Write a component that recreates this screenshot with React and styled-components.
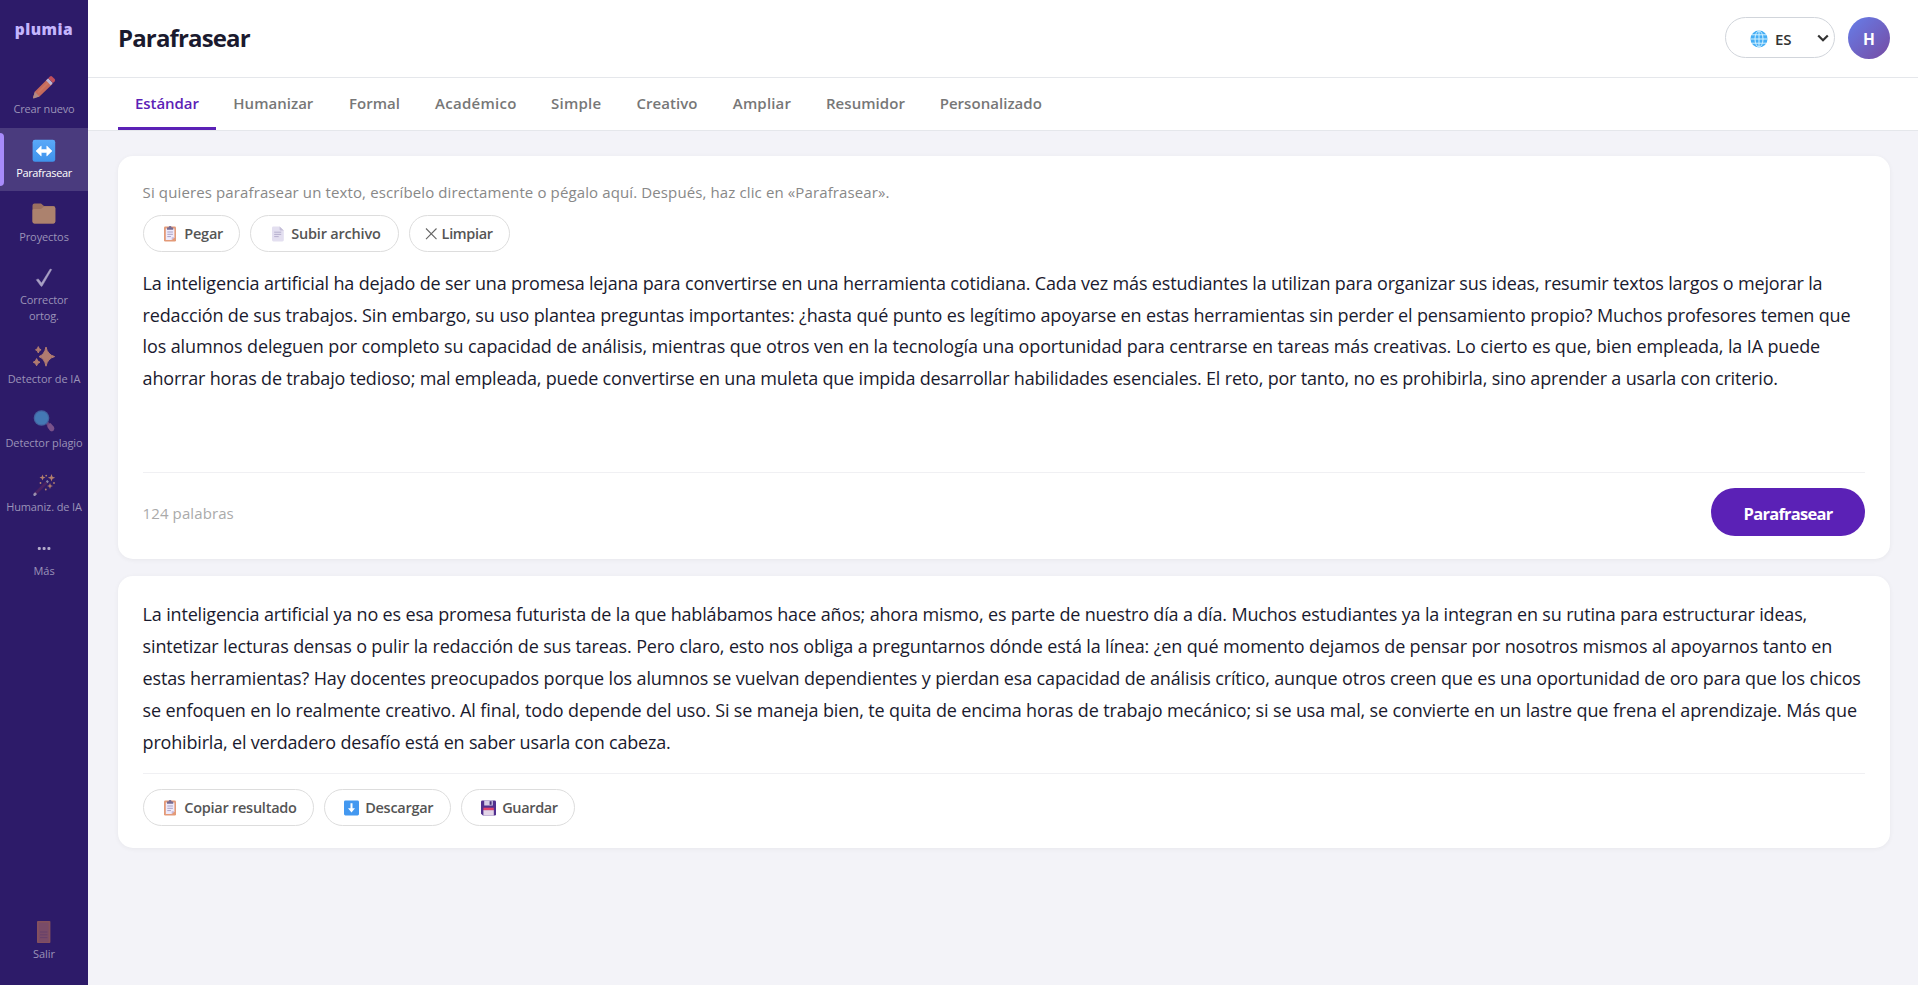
import React from 'react';
import styled, { createGlobalStyle } from 'styled-components';

const Global = createGlobalStyle`
  *, *::before, *::after { box-sizing: border-box; }
  body {
    margin: 0;
    background: #f3f3f8;
    font-family: "Open Sans", "Noto Sans", sans-serif;
    color: #1a1a2e;
  }
  button { font-family: inherit; cursor: pointer; }
`;

const Shell = styled.div`
  display: flex;
  height: 985px;
  overflow: hidden;
`;

const Sidebar = styled.aside`
  display: flex;
  flex-direction: column;
  flex: none;
  width: 88px;
  padding-bottom: 12.5px;
  background: #2d1b69;
`;

const Logo = styled.div`
  height: 64px;
  padding-top: 18px;
  text-align: center;
  font-size: 15.5px;
  font-weight: 800;
  line-height: 22px;
  letter-spacing: 0.5px;
  color: #c4b5fd;
`;

const NavItem = styled.a`
  position: relative;
  display: flex;
  flex-direction: column;
  align-items: center;
  flex: none;
  padding: 10px 0 11px;
  margin-top: ${(p) => (p.$last ? 'auto' : '0')};
  background: ${(p) => (p.$active ? 'rgba(255, 255, 255, 0.14)' : 'transparent')};
  color: ${(p) => (p.$active ? '#ffffff' : '#9b93b8')};

  &::before {
    content: '';
    display: ${(p) => (p.$active ? 'block' : 'none')};
    position: absolute;
    left: 0;
    top: 5px;
    bottom: 5px;
    width: 4px;
    border-radius: 0 4px 4px 0;
    background: #a78bfa;
  }
`;

const NavIcon = styled.span`
  display: flex;
  align-items: center;
  justify-content: center;
  height: 26px;
  margin-bottom: 1.2px;
`;

const NavLabel = styled.span`
  white-space: pre;
  text-align: center;
  font-size: 11px;
  line-height: 15.5px;
  letter-spacing: ${(p) => p.$track}px;
`;

const Main = styled.main`
  display: flex;
  flex-direction: column;
  flex: 1;
  min-width: 0;
`;

const Header = styled.header`
  display: flex;
  align-items: center;
  justify-content: space-between;
  height: 78px;
  padding: 0 28px 1px 30px;
  background: #ffffff;
  border-bottom: 1px solid #e5e7eb;
`;

const Title = styled.h1`
  margin: 0;
  font-size: 24px;
  font-weight: 700;
  line-height: 34px;
  letter-spacing: -0.85px;
`;

const HeaderTools = styled.div`
  display: flex;
  align-items: center;
  gap: 13px;
  height: 42px;
`;

const LanguageSelect = styled.button`
  display: flex;
  align-items: center;
  width: 110px;
  height: 41px;
  margin-bottom: 1px;
  padding: 0 5px 0 24px;
  border: 1px solid #d1d5db;
  border-radius: 21px;
  background: #ffffff;
  color: #333333;
  font-size: 15px;
  font-weight: 600;

  span { flex: 1; margin-left: 7px; padding-top: 2px; text-align: left; }
  svg:first-child { margin-top: 3px; }
`;

const Avatar = styled.div`
  width: 42px;
  height: 42px;
  border-radius: 50%;
  background: linear-gradient(135deg, #667eea, #764ba2);
  color: #ffffff;
  font-size: 15.5px;
  font-weight: 700;
  line-height: 44px;
  text-align: center;
`;

const Tabs = styled.nav`
  display: flex;
  height: 53px;
  flex: none;
  padding-left: 30px;
  background: #ffffff;
  border-bottom: 1px solid #e5e7eb;
`;

const Tab = styled.button`
  flex: none;
  width: ${(p) => p.$width}px;
  padding: 1px 0 0 17px;
  border: 0;
  border-bottom: 3px solid ${(p) => (p.$active ? '#5b21b6' : 'transparent')};
  background: none;
  color: ${(p) => (p.$active ? '#5b21b6' : '#777777')};
  font-size: 15px;
  font-weight: 600;
  letter-spacing: ${(p) => p.$track}px;
  text-align: left;
`;

const Content = styled.div`
  display: flex;
  flex-direction: column;
  gap: 17.3px;
  padding: 25px 28px 0 30px;
`;

const Card = styled.section`
  padding: 22.5px 25px 22.5px 24.6px;
  border-radius: 15px;
  background: #ffffff;
  box-shadow: 0 1px 5px rgba(0, 0, 0, 0.05);
`;

const Hint = styled.p`
  margin: 0 0 10px;
  font-size: 15px;
  line-height: 26.6px;
  letter-spacing: 0.12px;
  color: #888888;
`;

const ButtonRow = styled.div`
  display: flex;
  gap: 10px;
`;

const PillButton = styled.button`
  display: flex;
  align-items: center;
  width: ${(p) => p.$width}px;
  height: 36.7px;
  padding: 0 0 0 ${(p) => p.$inset ?? 17}px;
  border: 1px solid #dddddd;
  border-radius: 19px;
  background: #ffffff;
  color: #555555;
  font-size: 14.5px;
  font-weight: 600;
  white-space: nowrap;
  letter-spacing: ${(p) => p.$track}px;

  svg { flex: none; margin-top: 2px; margin-right: ${(p) => p.$gap ?? 3.6}px; }
  span { padding-top: 1px; }
`;

const TextBody = styled.div`
  height: ${(p) => p.$height}px;
  margin: ${(p) => p.$offset ?? 0}px 0 0;
  padding-top: 0.9px;
  font-size: 18px;
  line-height: 31.875px;
`;

const Line = styled.div`
  white-space: nowrap;
  letter-spacing: ${(p) => p.$track}px;
`;

const CardFooter = styled.div`
  display: flex;
  align-items: center;
  justify-content: space-between;
  margin-top: ${(p) => p.$offset ?? 0}px;
  padding-top: 15px;
  border-top: 1px solid #f0f0f3;
`;

const WordCount = styled.span`
  padding-top: 2px;
  font-size: 15px;
  letter-spacing: 0.1px;
  color: #aaaaaa;
`;

const PrimaryButton = styled.button`
  width: 154px;
  height: 48px;
  padding: 2px 0 0;
  border: 0;
  border-radius: 24px;
  background: #5b21b6;
  color: #ffffff;
  font-size: 16.5px;
  font-weight: 700;
  letter-spacing: -0.75px;
`;

const Pencil = () => (
  <svg width="24" height="24" viewBox="0 0 24 24">
    <path d="M3 16.5 15.5 4l5 5L7.5 21.5 1.5 23q-.6 0-.5-.7z" fill="#c46a5c" />
    <path d="M1 23.2 2.8 16.8 7.4 21.6 1.7 23.6z" fill="#b08a86" />
    <path d="m14 5.5 2.2-2.2 4.7 4.7-2.2 2.2z" fill="#b9b3d2" />
    <path d="m16.2 3.3 1.7-1.7q1.2-1 2.4.1l2.4 2.4q1 1.1 0 2.2L21 8z" fill="#bf4f5c" />
    <path d="m6 17.8 10-10" stroke="#cc7460" strokeWidth="2" />
  </svg>
);

const SwapArrows = () => (
  <svg width="24" height="24" viewBox="0 0 24 24">
    <defs>
      <linearGradient id="swapBlue" x1="0" y1="0" x2="0" y2="1">
        <stop offset="0" stopColor="#5aa9f8" />
        <stop offset="1" stopColor="#3f93ec" />
      </linearGradient>
    </defs>
    <rect x=".6" y=".8" width="22.600" height="22" rx="2.400" fill="url(#swapBlue)" />
    <path d="M4 12 9.200 7v3.600h5.600V7L20 12l-5.200 5v-3.600H9.200V17z" fill="#fff" stroke="#fff" strokeWidth=".6" strokeLinejoin="round" />
  </svg>
);

const Folder = () => (
  <svg width="24" height="24" viewBox="0 0 24 24">
    <path d="M.5 3.500q0-2 2-2H9L12 4h9.300q2 0 2 2v13.500q0 2-2 2H2.500q-2 0-2-2z" fill="#9b7060" />
    <path d="M.5 8.300Q.5 7 2 7h7l3-2.500h9.700q1.600 0 1.600 1.800v13.200q0 2-2 2H2.500q-2 0-2-2z" fill="#ac826e" />
  </svg>
);

const Check = () => (
  <svg width="24" height="24" viewBox="0 0 24 24">
    <path d="m4.300 13.800 2-.9 3.200 4.200L18.200 3l1.500.5L10 20.300H9z" fill="#a8a0c4" stroke="#a8a0c4" strokeWidth=".5" strokeLinejoin="round" />
  </svg>
);

const Sparkles = () => (
  <svg width="24" height="24" viewBox="0 0 24 24">
    <g fill="#b07b70" stroke="#b07b70" strokeWidth="1" strokeLinejoin="round">
      <path d="M14 2q1.600 7.800 8.600 9.600Q15.600 13.400 14 21.200q-1.600-7.800-7-9.600Q12.400 9.800 14 2z" />
      <path d="M6.300 1.600q.5 2.700 2.800 3.200-2.300.5-2.800 3.200-.5-2.700-2.800-3.200 2.300-.5 2.800-3.200z" />
      <path d="M4.600 13.600q.7 3 3.400 3.600-2.700.6-3.400 3.600-.7-3-3.400-3.600 2.700-.6 3.400-3.600z" />
    </g>
  </svg>
);

const Magnifier = () => (
  <svg width="24" height="24" viewBox="0 0 24 24">
    <path d="m13.500 14 2.200-1.500 6.300 5.700q1 2.500-.8 3.700-1.500 1-3.200-.2z" fill="#6b4480" />
    <path d="m16.500 15.500 2-1.500 3.500 4q1 2.300-.8 3.700-1.500 1-3.200-.2l-2.700-3.500z" fill="#79528a" />
    <circle cx="9.500" cy="9" r="7.800" fill="#44619f" />
    <circle cx="9.500" cy="9" r="6.600" fill="#4478b4" />
  </svg>
);

const Wand = () => (
  <svg width="24" height="24" viewBox="0 0 24 24">
    <path d="M2.500 21.500 14.500 9.500" stroke="#4a2263" strokeWidth="2.800" />
    <path d="m1.500 20.800 1.600-1.600 1.900 1.900-1.600 1.600q-1 .7-1.700 0t-.2-1.900z" fill="#9a90ae" />
    <path d="m13.800 8.300 1.600-1.200 1.500 1.600-1.500 1.600z" fill="#8d86a4" />
    <g fill="#b4806c">
      <path d="m19.500 1 1 2.700 2.700 1-2.700 1-1 2.700-1-2.700-2.700-1 2.700-1z" />
      <path d="m10.500 1.600.8 2.200 2.200.8-2.200.8-.8 2.200-.8-2.200-2.200-.8 2.200-.8z" />
      <path d="m18 10 .8 2.200 2.200.8-2.200.8-.8 2.200-.8-2.200-2.200-.8 2.200-.8z" />
      <circle cx="14.200" cy="2.600" r=".9" />
      <circle cx="8.500" cy="10" r=".9" />
      <circle cx="22" cy="10" r=".9" />
      <circle cx="13.800" cy="16.500" r=".9" />
    </g>
  </svg>
);

const Dots = () => (
  <svg width="24" height="24" viewBox="0 0 24 24">
    <g fill="#b3acca">
      <rect x="5.800" y="11" width="3" height="3" rx="1.100" />
      <rect x="10.600" y="11" width="3" height="3" rx="1.100" />
      <rect x="15.400" y="11" width="3" height="3" rx="1.100" />
    </g>
  </svg>
);

const Door = () => (
  <svg width="24" height="24" viewBox="0 0 24 24">
    <rect x="5" y="1" width="13.400" height="22" rx=".8" fill="#85515d" />
    <rect x="6.800" y="2.600" width="9.800" height="19.600" fill="#794b68" />
    <path d="M8 12h7.400M8 14.800h7.400M8 17.600h7.400" stroke="#67406a" strokeWidth="1" />
  </svg>
);

const Globe = () => (
  <svg width="18" height="18" viewBox="0 0 18 18">
    <circle cx="9" cy="9" r="8.500" fill="#45aef5" />
    <g fill="none" stroke="#d3f1ff" strokeWidth="1">
      <ellipse cx="9" cy="9" rx="4" ry="8" />
      <path d="M9 .5v17M.5 9h17M2 4.800h14M2 13.200h14" />
    </g>
  </svg>
);

const Chevron = () => (
  <svg width="12" height="12" viewBox="0 0 12 12">
    <path d="m1.200 3.500 4.800 4.800 4.800-4.800" fill="none" stroke="#333" strokeWidth="2.200" />
  </svg>
);

const Clipboard = () => (
  <svg width="20" height="20" viewBox="0 0 20 20">
    <rect x="3" y="2.500" width="12" height="15" rx="1.200" fill="#e39a78" />
    <path d="M4.800 4.500h8.600v8.800L10.700 16H4.800z" fill="#eeeafa" />
    <path d="M13.400 13.300h-2.700V16z" fill="#c2b6dc" />
    <path d="M6.300 8h5.600M6.300 10.300h5.600M6.300 12.600h3.600" stroke="#a9a1c6" strokeWidth="1" />
    <path d="M6 3.400h1.600Q7.800 2 9.100 2t1.500 1.400h1.600v2.400H6z" fill="#776c93" />
  </svg>
);

const Page = () => (
  <svg width="20" height="20" viewBox="0 0 20 20">
    <path d="M4 4q0-1.400 1.400-1.400h6.200L15.800 6.400v9.700q0 1.300-1.400 1.300h-9Q4 17.400 4 16.100z" fill="#e3dff0" />
    <path d="m11.600 2.600 4.200 3.800h-3.400q-.8 0-.8-.8z" fill="#c5bfd8" />
    <path d="M6.200 8.200h7M6.200 10.400h7M6.200 12.600h4.500" stroke="#b0a9ca" strokeWidth=".9" />
  </svg>
);

const Cross = () => (
  <svg width="13" height="14" viewBox="0 0 13 14">
    <path d="m1 1.500 10.500 10.700M11.500 1.500 1 12.200" stroke="#666" strokeWidth="1.100" />
  </svg>
);

const Download = () => (
  <svg width="20" height="20" viewBox="0 0 20 20">
    <rect x="2" y="2.500" width="15" height="15" rx="1.400" fill="#4398f0" />
    <path d="M8.500 5.200h2v5h2.500L9.500 14.500 6 10.200h2.500z" fill="#fff" />
  </svg>
);

const Floppy = () => (
  <svg width="20" height="20" viewBox="0 0 20 20">
    <path d="M2 3.700q0-1.200 1.200-1.200h12.600q1.200 0 1.200 1.200v12.600q0 1.200-1.200 1.200H4L2 15.700z" fill="#51308f" />
    <path d="M5.200 2.500h8.600v5H5.200z" fill="#d4cde6" />
    <path d="M10.600 3.200h2v3.600h-2z" fill="#46307c" />
    <path d="M4.400 9.700h10.400v3H4.400z" fill="#e0436d" />
    <path d="M4.400 12.200h10.400v5.300H4.400z" fill="#e3d5e8" />
  </svg>
);

const navItems = [
  { label: 'Crear nuevo', icon: <Pencil />, track: -0.16 },
  { label: 'Parafrasear', icon: <SwapArrows />, track: -0.36, active: true },
  { label: 'Proyectos', icon: <Folder />, track: -0.1 },
  { label: 'Corrector\nortog.', icon: <Check />, track: -0.12 },
  { label: 'Detector de IA', icon: <Sparkles />, track: -0.04 },
  { label: 'Detector plagio', icon: <Magnifier />, track: -0.08 },
  { label: 'Humaniz. de IA', icon: <Wand />, track: -0.12 },
  { label: 'Más', icon: <Dots />, track: 0 },
];

const tabs = [
  { label: 'Estándar', width: 98.3, track: -0.05, active: true },
  { label: 'Humanizar', width: 115.7, track: 0.02 },
  { label: 'Formal', width: 86, track: 0.04 },
  { label: 'Académico', width: 116, track: 0.28 },
  { label: 'Simple', width: 85.5, track: 0.26 },
  { label: 'Creativo', width: 96.3, track: 0.05 },
  { label: 'Ampliar', width: 93.2, track: 0.18 },
  { label: 'Resumidor', width: 113.7, track: 0.05 },
  { label: 'Personalizado', width: 136, track: 0.04 },
];

const sourceLines = [
  ['La inteligencia artificial ha dejado de ser una promesa lejana para convertirse en una herramienta cotidiana. Cada vez más estudiantes la utilizan para organizar sus ideas, resumir textos largos o mejorar la', -0.167],
  ['redacción de sus trabajos. Sin embargo, su uso plantea preguntas importantes: ¿hasta qué punto es legítimo apoyarse en estas herramientas sin perder el pensamiento propio? Muchos profesores temen que', -0.153],
  ['los alumnos deleguen por completo su capacidad de análisis, mientras que otros ven en la tecnología una oportunidad para centrarse en tareas más creativas. Lo cierto es que, bien empleada, la IA puede', -0.131],
  ['ahorrar horas de trabajo tedioso; mal empleada, puede convertirse en una muleta que impida desarrollar habilidades esenciales. El reto, por tanto, no es prohibirla, sino aprender a usarla con criterio.', -0.186],
];

const resultLines = [
  ['La inteligencia artificial ya no es esa promesa futurista de la que hablábamos hace años; ahora mismo, es parte de nuestro día a día. Muchos estudiantes ya la integran en su rutina para estructurar ideas,', -0.168],
  ['sintetizar lecturas densas o pulir la redacción de sus tareas. Pero claro, esto nos obliga a preguntarnos dónde está la línea: ¿en qué momento dejamos de pensar por nosotros mismos al apoyarnos tanto en', -0.145],
  ['estas herramientas? Hay docentes preocupados porque los alumnos se vuelvan dependientes y pierdan esa capacidad de análisis crítico, aunque otros creen que es una oportunidad de oro para que los chicos', -0.145],
  ['se enfoquen en lo realmente creativo. Al final, todo depende del uso. Si se maneja bien, te quita de encima horas de trabajo mecánico; si se usa mal, se convierte en un lastre que frena el aprendizaje. Más que', -0.129],
  ['prohibirla, el verdadero desafío está en saber usarla con cabeza.', -0.18],
];

const Lines = ({ lines }) => lines.map(([text, track]) => <Line key={text} $track={track}>{text}</Line>);

export default function App() {
  return (
    <Shell>
      <Global />
      <Sidebar>
        <Logo>plumia</Logo>
        {navItems.map((item) => (
          <NavItem key={item.label} $active={item.active}>
            <NavIcon>{item.icon}</NavIcon>
            <NavLabel $track={item.track}>{item.label}</NavLabel>
          </NavItem>
        ))}
        <NavItem $last>
          <NavIcon><Door /></NavIcon>
          <NavLabel $track={0}>Salir</NavLabel>
        </NavItem>
      </Sidebar>
      <Main>
        <Header>
          <Title>Parafrasear</Title>
          <HeaderTools>
            <LanguageSelect>
              <Globe />
              <span>ES</span>
              <Chevron />
            </LanguageSelect>
            <Avatar>H</Avatar>
          </HeaderTools>
        </Header>
        <Tabs>
          {tabs.map((tab) => (
            <Tab key={tab.label} $width={tab.width} $track={tab.track} $active={tab.active}>{tab.label}</Tab>
          ))}
        </Tabs>
        <Content>
          <Card>
            <Hint>Si quieres parafrasear un texto, escríbelo directamente o pégalo aquí. Después, haz clic en «Parafrasear».</Hint>
            <ButtonRow>
              <PillButton $width={97} $track={-0.2}><Clipboard /><span>Pegar</span></PillButton>
              <PillButton $width={149} $track={-0.2}><Page /><span>Subir archivo</span></PillButton>
              <PillButton $width={101} $track={-0.33} $inset={15.5} $gap={3.5}><Cross /><span>Limpiar</span></PillButton>
            </ButtonRow>
            <TextBody $height={205.4} $offset={15}><Lines lines={sourceLines} /></TextBody>
            <CardFooter>
              <WordCount>124 palabras</WordCount>
              <PrimaryButton>Parafrasear</PrimaryButton>
            </CardFooter>
          </Card>
          <Card>
            <TextBody $height={159.4}><Lines lines={resultLines} /></TextBody>
            <CardFooter $offset={15}>
              <ButtonRow>
                <PillButton $width={171} $track={-0.25}><Clipboard /><span>Copiar resultado</span></PillButton>
                <PillButton $width={127} $track={-0.28}><Download /><span>Descargar</span></PillButton>
                <PillButton $width={114} $track={-0.36}><Floppy /><span>Guardar</span></PillButton>
              </ButtonRow>
            </CardFooter>
          </Card>
        </Content>
      </Main>
    </Shell>
  );
}
